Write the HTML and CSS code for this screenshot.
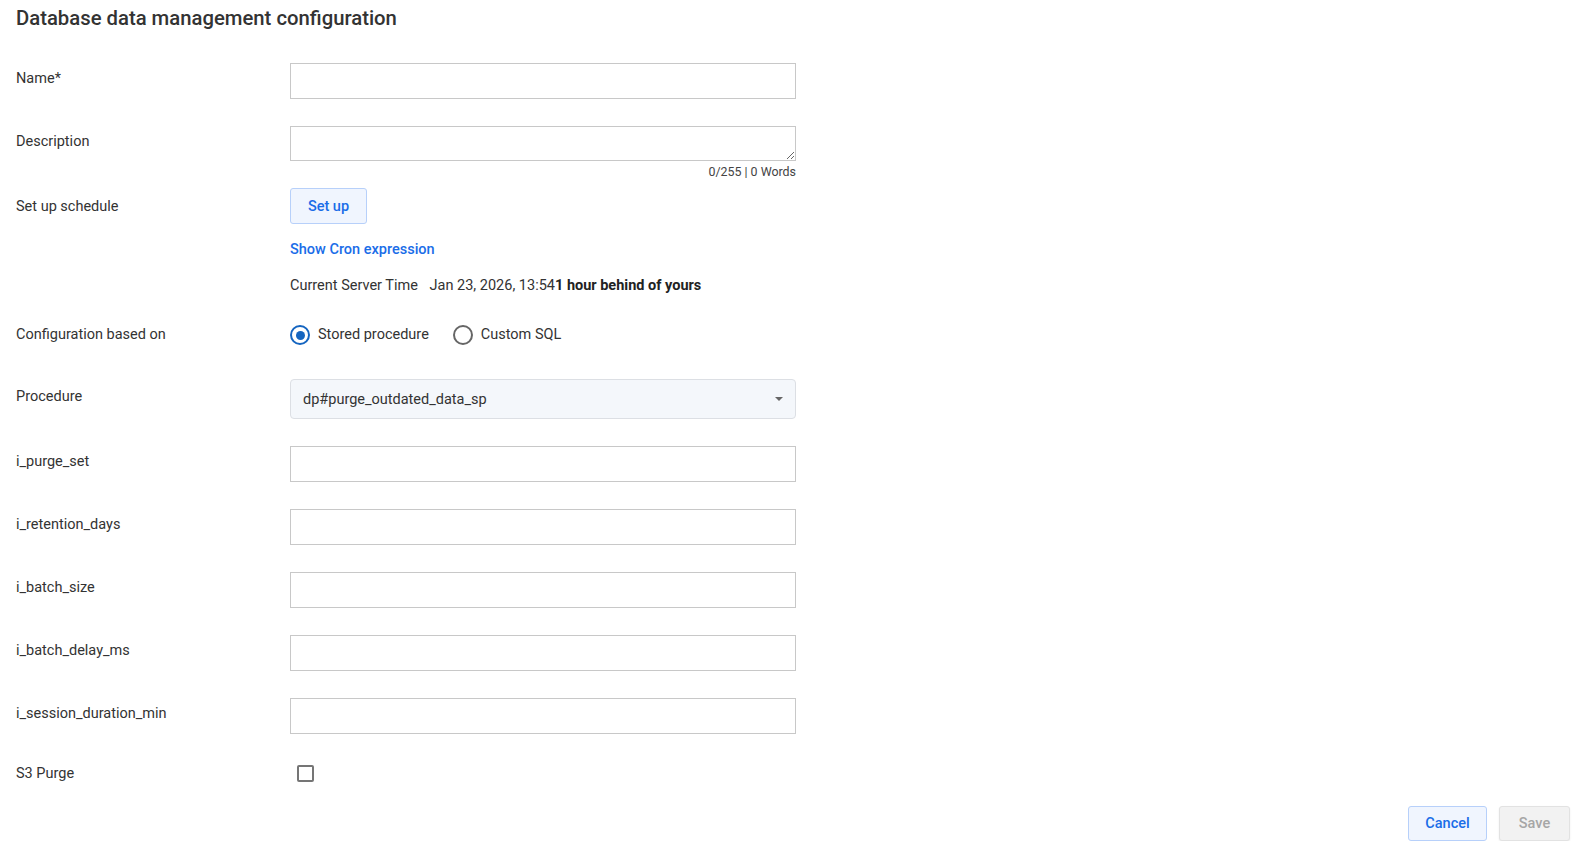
FILE: index.html
```html
<!DOCTYPE html>
<html lang="en">
<head>
  <meta charset="UTF-8">
  <meta name="viewport" content="width=device-width, initial-scale=1.0">
  <title>Database data management configuration</title>
  <link rel="stylesheet" href="styles.css">
</head>
<body>
  <div class="page">
    <h1 class="title">Database data management configuration</h1>

    <div class="form">
      <div class="row">
        <label class="label">Name*</label>
        <input class="text-input" type="text">
      </div>

      <div class="row row-desc">
        <label class="label">Description</label>
        <div class="field">
          <textarea class="text-area"></textarea>
          <div class="counter">0/255 | 0 Words</div>
        </div>
      </div>

      <div class="row row-schedule">
        <label class="label label-schedule">Set up schedule</label>
        <div class="field">
          <button class="btn btn-primary btn-setup">Set up</button>
          <a class="cron-link" href="#">Show Cron expression</a>
          <div class="server-time">
            <span class="server-label">Current Server Time</span>
            <span>Jan 23, 2026, 13:54</span><b>1 hour behind of yours</b>
          </div>
        </div>
      </div>

      <div class="row row-radio">
        <label class="label label-radio">Configuration based on</label>
        <div class="radios">
          <label class="radio checked"><span class="radio-dot"></span>Stored procedure</label>
          <label class="radio"><span class="radio-dot"></span>Custom SQL</label>
        </div>
      </div>

      <div class="row row-select">
        <label class="label label-select">Procedure</label>
        <div class="select">
          <span>dp#purge_outdated_data_sp</span>
          <span class="caret"></span>
        </div>
      </div>

      <div class="row">
        <label class="label">i_purge_set</label>
        <input class="text-input" type="text">
      </div>
      <div class="row">
        <label class="label">i_retention_days</label>
        <input class="text-input" type="text">
      </div>
      <div class="row">
        <label class="label">i_batch_size</label>
        <input class="text-input" type="text">
      </div>
      <div class="row">
        <label class="label">i_batch_delay_ms</label>
        <input class="text-input" type="text">
      </div>
      <div class="row">
        <label class="label">i_session_duration_min</label>
        <input class="text-input" type="text">
      </div>

      <div class="row row-check">
        <label class="label label-check">S3 Purge</label>
        <span class="checkbox"></span>
      </div>
    </div>

    <div class="footer">
      <button class="btn btn-primary btn-cancel">Cancel</button>
      <button class="btn btn-disabled">Save</button>
    </div>
  </div>
</body>
</html>
```

FILE: styles.css
```css
body {
  margin: 0;
  padding: 0;
  font-family: Roboto, "Liberation Sans", Arial, sans-serif;
  font-size: 14.5px;
  color: #333;
  background: #fff;
}
.page {
  padding: 6px 11px 0 16px;
}
.title {
  margin: 0;
  font-size: 20.3px;
  font-weight: 500;
  line-height: 24px;
  color: #333;
}
.form {
  margin-top: 33px;
}
.row {
  display: grid;
  grid-template-columns: 274px 506px;
  margin-bottom: 27px;
}
.label {
  padding-top: 6px;
  line-height: 20px;
  color: #333;
}
.text-input,
.text-area {
  box-sizing: border-box;
  width: 506px;
  height: 36px;
  margin: 0;
  border: 1px solid #c8c8c8;
  border-radius: 0;
  font-family: inherit;
  font-size: 14.5px;
  padding: 0 10px;
  outline: none;
}
.text-area {
  display: block;
  height: 35px;
  resize: vertical;
}
.field {
  display: flex;
  flex-direction: column;
  align-items: flex-start;
}
.row-desc {
  margin-bottom: 8px;
}
.counter {
  align-self: flex-end;
  font-size: 12.4px;
  line-height: 16px;
  margin-top: 3px;
  color: #444;
}
.label-schedule {
  padding-top: 9px;
}
.btn {
  box-sizing: border-box;
  height: 35px;
  padding: 0 16px;
  border-radius: 3px;
  font-family: inherit;
  font-size: 14.5px;
  font-weight: 500;
  cursor: pointer;
}
.btn-setup {
  width: 77px;
  height: 36px;
}
.btn-primary {
  background: #f0f5fe;
  border: 1px solid #b7d0fa;
  color: #1a6de8;
}
.btn-disabled {
  background: #f2f2f2;
  border: 1px solid #e2e2e2;
  color: #a6a6a6;
  box-shadow: 0 1px 2px rgba(0, 0, 0, 0.08);
}
.cron-link {
  margin-top: 16px;
  line-height: 20px;
  font-weight: 500;
  color: #1a6de8;
  text-decoration: none;
}
.server-time {
  margin-top: 16px;
  line-height: 20px;
  color: #333;
}
.server-label {
  margin-right: 8px;
}
.server-time b {
  font-weight: 700;
  color: #222;
}
.row-schedule {
  margin-bottom: 28px;
}
.row-radio {
  padding-top: 1px;
  margin-bottom: 34px;
}
.label-radio {
  padding-top: 0;
}
.radios {
  display: flex;
  gap: 24px;
  height: 20px;
  align-items: center;
}
.radio {
  display: flex;
  align-items: center;
  gap: 8px;
  line-height: 20px;
}
.radio-dot {
  box-sizing: border-box;
  width: 20px;
  height: 20px;
  border: 2px solid #666;
  border-radius: 50%;
  display: flex;
  align-items: center;
  justify-content: center;
}
.radio.checked .radio-dot {
  border-color: #1565c0;
}
.radio.checked .radio-dot::after {
  content: "";
  width: 9px;
  height: 9px;
  border-radius: 50%;
  background: #1565c0;
}
.label-select {
  padding-top: 8px;
}
.select {
  box-sizing: border-box;
  height: 40px;
  border: 1px solid #dcdfe4;
  border-radius: 4px;
  background: #f4f7fb;
  display: flex;
  align-items: center;
  justify-content: space-between;
  padding: 0 12px 0 12px;
  color: #333;
}
.caret {
  width: 0;
  height: 0;
  border-left: 4px solid transparent;
  border-right: 4px solid transparent;
  border-top: 4px solid #666;
}
.row-select {
  margin-bottom: 27px;
}
.row-check {
  margin-top: 29px;
  align-items: center;
}
.label-check {
  padding-top: 1px;
}
.checkbox {
  box-sizing: border-box;
  display: block;
  width: 17px;
  height: 17px;
  margin-left: 7px;
  border: 2px solid #757575;
  border-radius: 2px;
}
.footer {
  display: flex;
  justify-content: flex-end;
  gap: 12px;
  margin-top: -5px;
}
.btn-cancel {
  width: 79px;
}
.btn-disabled {
  width: 71px;
}
```
